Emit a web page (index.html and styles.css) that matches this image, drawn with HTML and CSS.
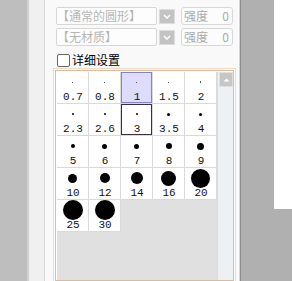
FILE: index.html
```html
<!DOCTYPE html>
<html lang="zh">
<head>
<meta charset="utf-8">
<link rel="stylesheet" href="styles.css">
</head>
<body>
<div class="g1"></div>
<div class="g1b"></div>
<div class="side"></div>
<div class="sep"></div>
<div class="panel">
  <div class="row">
    <div class="field">【通常的圆形】</div>
    <div class="dd"><svg width="8" height="5" viewBox="0 0 8 5"><path d="M1 1 L4 4 L7 1" fill="none" stroke="#fff" stroke-width="1.5"/></svg></div>
    <div class="num"><span>强度</span><span>0</span></div>
  </div>
  <div class="row r2">
    <div class="field">【无材质】</div>
    <div class="dd"><svg width="8" height="5" viewBox="0 0 8 5"><path d="M1 1 L4 4 L7 1" fill="none" stroke="#fff" stroke-width="1.5"/></svg></div>
    <div class="num"><span>强度</span><span>0</span></div>
  </div>
  <div class="check"><span class="box"></span><span>详细设置</span></div>
  <div class="list">
    <div class="grid">
      <div class="cell"><div class="dw"><i class="dot light" style="width:1px;height:1px"></i></div><div class="lb">0.7</div></div>
      <div class="cell"><div class="dw"><i class="dot light" style="width:1px;height:1px"></i></div><div class="lb">0.8</div></div>
      <div class="cell sel"><div class="dw"><i class="dot light" style="width:1px;height:1px"></i></div><div class="lb">1</div></div>
      <div class="cell"><div class="dw"><i class="dot light" style="width:1px;height:1px"></i></div><div class="lb">1.5</div></div>
      <div class="cell"><div class="dw"><i class="dot light" style="width:1px;height:2px"></i></div><div class="lb">2</div></div>
      <div class="cell"><div class="dw"><i class="dot" style="width:2px;height:2px"></i></div><div class="lb">2.3</div></div>
      <div class="cell"><div class="dw"><i class="dot" style="width:2px;height:2px"></i></div><div class="lb">2.6</div></div>
      <div class="cell cur"><div class="dw"><i class="dot" style="width:2px;height:2px"></i></div><div class="lb">3</div></div>
      <div class="cell"><div class="dw"><i class="dot" style="width:3px;height:3px"></i></div><div class="lb">3.5</div></div>
      <div class="cell"><div class="dw"><i class="dot" style="width:3px;height:3px"></i></div><div class="lb">4</div></div>
      <div class="cell"><div class="dw"><i class="dot" style="width:4px;height:4px"></i></div><div class="lb">5</div></div>
      <div class="cell"><div class="dw"><i class="dot" style="width:5px;height:5px"></i></div><div class="lb">6</div></div>
      <div class="cell"><div class="dw"><i class="dot" style="width:5px;height:5px"></i></div><div class="lb">7</div></div>
      <div class="cell"><div class="dw"><i class="dot" style="width:6px;height:6px"></i></div><div class="lb">8</div></div>
      <div class="cell"><div class="dw"><i class="dot" style="width:7px;height:7px"></i></div><div class="lb">9</div></div>
      <div class="cell"><div class="dw"><i class="dot" style="width:9px;height:9px"></i></div><div class="lb">10</div></div>
      <div class="cell"><div class="dw"><i class="dot" style="width:10px;height:10px"></i></div><div class="lb">12</div></div>
      <div class="cell"><div class="dw"><i class="dot" style="width:12px;height:12px"></i></div><div class="lb">14</div></div>
      <div class="cell"><div class="dw"><i class="dot" style="width:15px;height:15px"></i></div><div class="lb">16</div></div>
      <div class="cell"><div class="dw"><i class="dot" style="width:19px;height:19px"></i></div><div class="lb">20</div></div>
      <div class="cell"><div class="dw"><i class="dot" style="width:20px;height:20px"></i></div><div class="lb">25</div></div>
      <div class="cell"><div class="dw"><i class="dot" style="width:20px;height:20px"></i></div><div class="lb">30</div></div>
    </div>
    <div class="scroll"><div class="up"><svg width="7" height="4" viewBox="0 0 7 4"><path d="M0.5 3.5 L3.5 0.5 L6.5 3.5 Z" fill="#fff"/></svg></div></div>
  </div>
</div>
<div class="rsep"></div>
<div class="gr"></div>
<div class="far"><div class="white"></div></div>
</body>
</html>
```
FILE: styles.css
```css
html, body {
  margin: 0;
  padding: 0;
}
body {
  width: 292px;
  height: 281px;
  overflow: hidden;
  display: flex;
  background: #b0b0b0;
  font-family: "Noto Sans CJK SC", "Liberation Sans", sans-serif;
}
.g1 { width: 27px; background: #bebebe; }
.g1b { width: 2px; background: #d2d2d2; }
.side { width: 15px; background: #f0f0f0; }
.sep { width: 1px; border-left: 1px solid #d6d6d6; background: #fbfbfb; }
.panel {
  width: 182px;
  padding: 7px 0 0 10px;
  background: #f9f9f9;
  display: flex;
  flex-direction: column;
}
.row {
  display: flex;
  align-items: center;
  height: 18px;
}
.r2 { margin-top: 3px; }
.field {
  box-sizing: border-box;
  width: 101px;
  height: 18px;
  border: 1px solid #d6d6d6;
  border-radius: 2px;
  background: #fdfdfd;
  color: #b6b6b6;
  font-size: 12px;
  line-height: 16px;
  padding-left: 0;
  white-space: nowrap;
  overflow: hidden;
}
.dd {
  box-sizing: border-box;
  margin-left: 2px;
  width: 16px;
  height: 15px;
  background: #c3c3c3;
  border: 1px solid #dcdcdc;
  display: flex;
  align-items: center;
  justify-content: center;
}
.num {
  box-sizing: border-box;
  margin-left: 6px;
  width: 52px;
  height: 18px;
  border: 1px solid #d8d8d8;
  border-radius: 3px;
  background: #fcfcfc;
  color: #aaaaaa;
  font-size: 12px;
  line-height: 16px;
  display: flex;
  justify-content: space-between;
  padding: 0 3px 0 2px;
}
.check {
  margin-top: 7px;
  height: 14px;
  display: flex;
  align-items: center;
  font-size: 12px;
  line-height: 14px;
  color: #000;
}
.box {
  box-sizing: border-box;
  width: 13px;
  height: 13px;
  margin-left: 1px;
  margin-right: 2px;
  border: 1px solid #666;
  border-radius: 2px;
  background: #fff;
}
.list {
  box-sizing: border-box;
  margin-top: 3px;
  margin-left: -1px;
  width: 179px;
  height: 220px;
  border: 1px solid #d9bc9e;
  box-shadow: 0 0 0 1px #fff, 0 0 0 2px #efdcc8;
  background: #fff;
  padding: 1px 0 0 1px;
  display: flex;
}
.grid {
  width: 160px;
  background: #e0e0e0;
  display: grid;
  grid-template-columns: repeat(5, 32px);
  grid-auto-rows: 32px;
  align-content: start;
}
.cell {
  box-sizing: border-box;
  background: #fff;
  border-right: 1px solid #d9d9d9;
  border-bottom: 1px solid #d9d9d9;
  display: flex;
  flex-direction: column;
}
.cell.sel {
  background: #dddcfb;
  box-shadow: inset 0 0 0 1px #8682c6;
}
.cell.cur {
  box-shadow: inset 0 0 0 1px #3a3042;
}
.dw {
  height: 20px;
  display: flex;
  align-items: center;
  justify-content: center;
}
.dot {
  display: block;
  border-radius: 50%;
  background: #000;
}
.dot.light { background: #555; border-radius: 0; }
.lb {
  height: 11px;
  font-family: "Liberation Mono", monospace;
  font-size: 11px;
  line-height: 11px;
  text-align: center;
  color: #111;
  padding-left: 1px;
}
.scroll {
  width: 16px;
  background: #eef1f4;
  border-left: 1px solid #dcdcdc;
}
.up {
  box-sizing: border-box;
  margin: 0 0 0 1px;
  width: 14px;
  height: 15px;
  background: #c6c6c6;
  border: 1px solid #e0e0e0;
  display: flex;
  align-items: center;
  justify-content: center;
}
.rsep {
  width: 3px;
  background: linear-gradient(to right, #fdfdfd 0 1px, #d4d4d4 1px 2px, #8e8e8e 2px 3px);
}
.gr { width: 33px; background: #b0b0b0; }
.far { width: 18px; background: #b0b0b0; }
.white { height: 209px; background: #fff; }
```
